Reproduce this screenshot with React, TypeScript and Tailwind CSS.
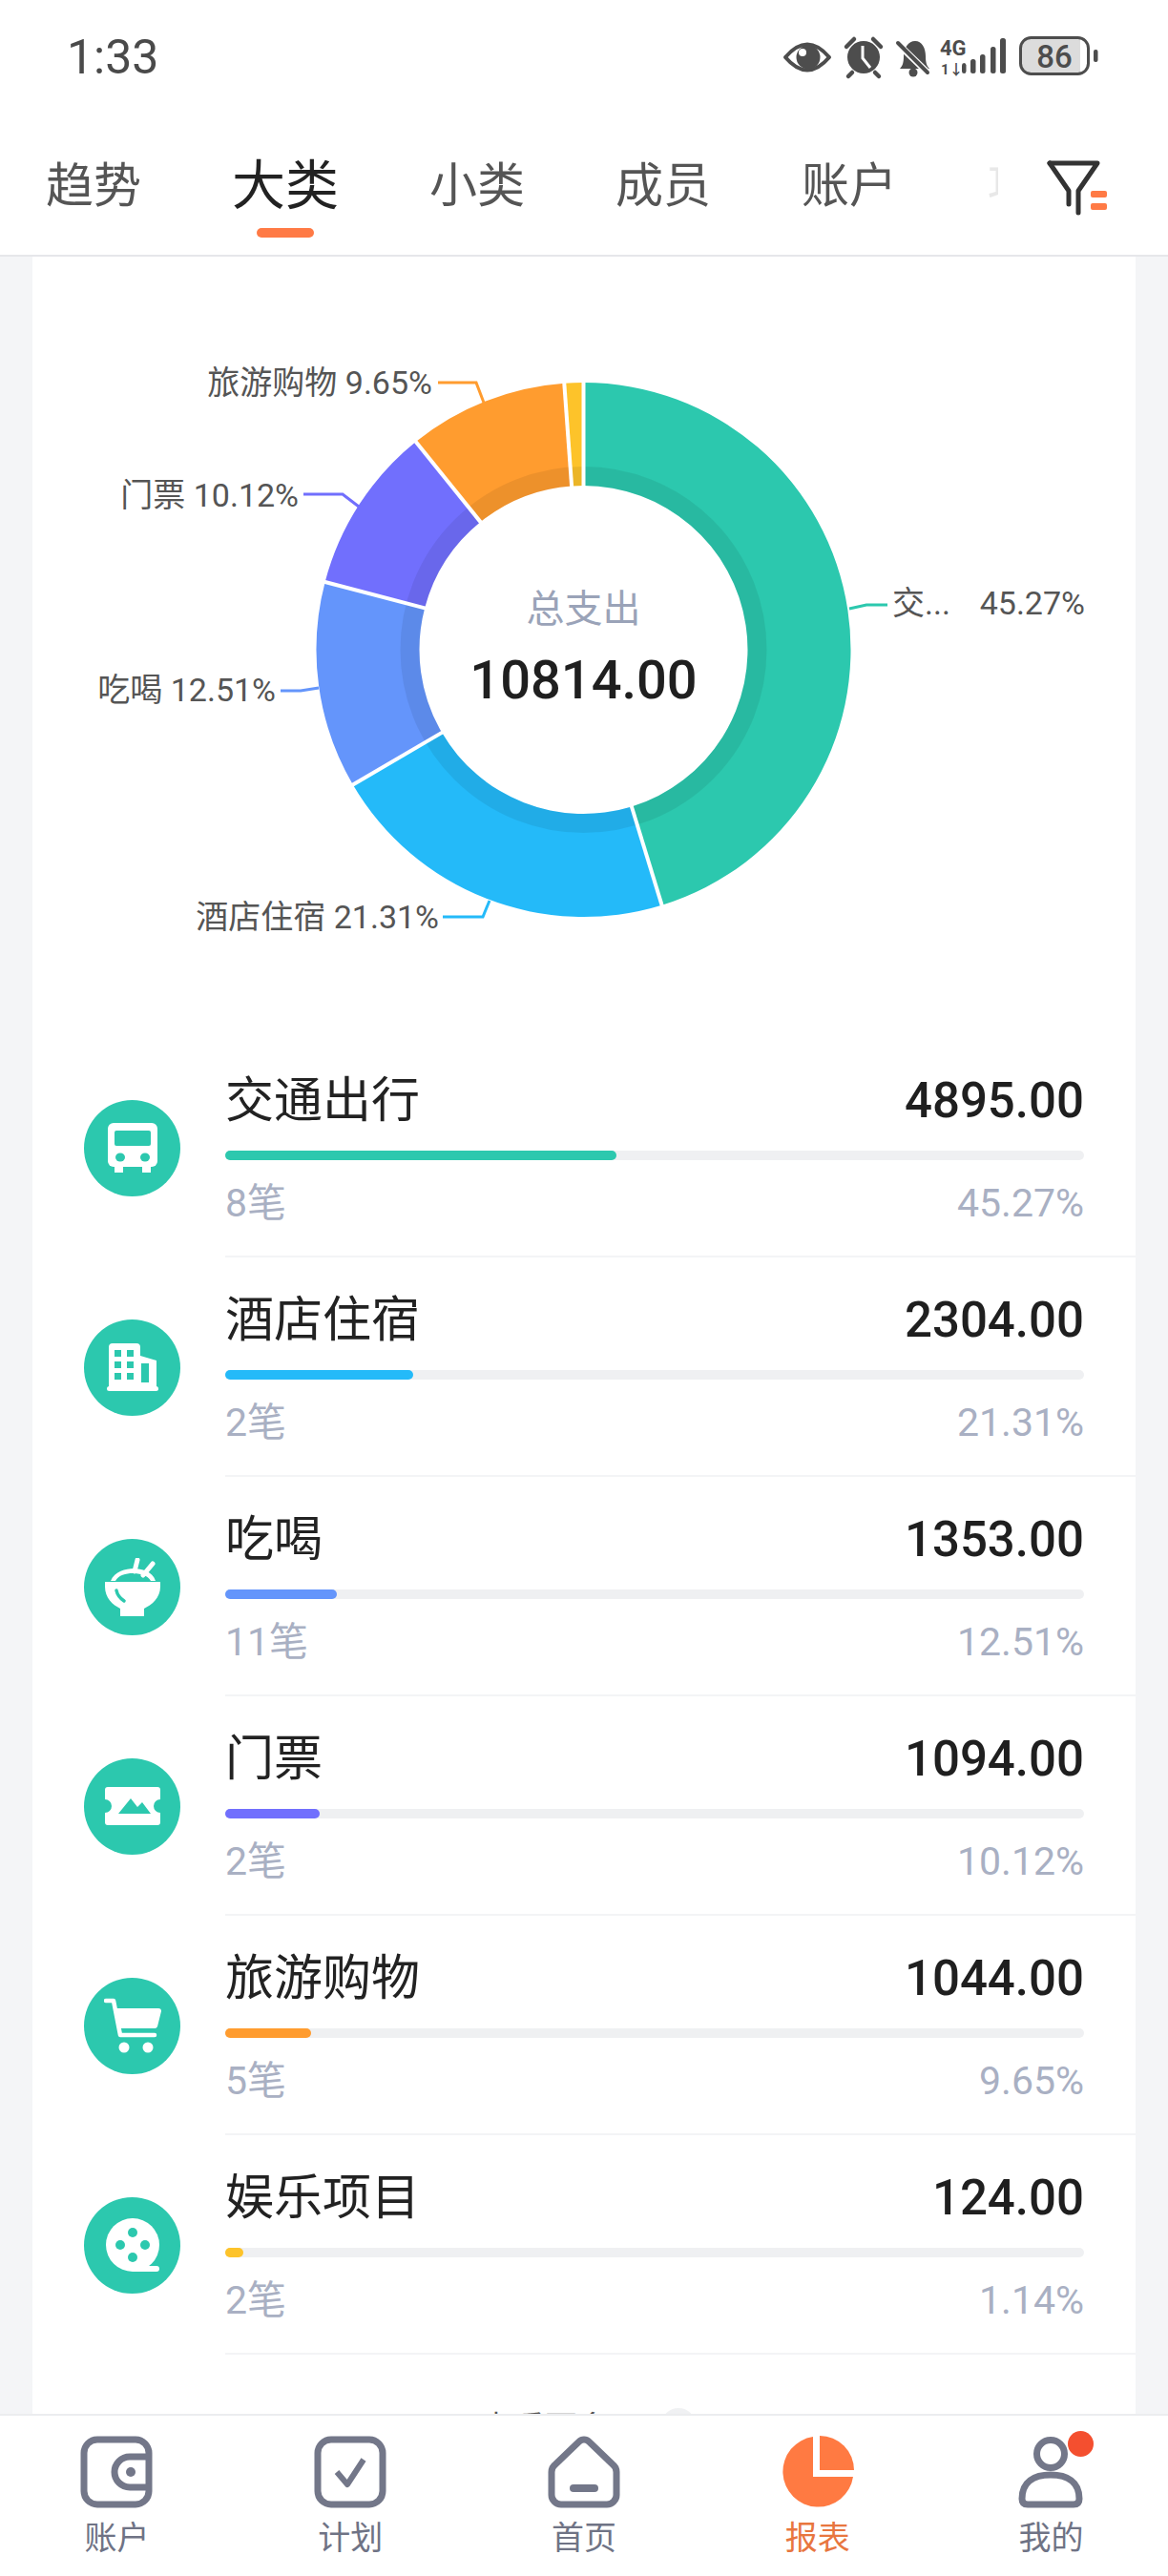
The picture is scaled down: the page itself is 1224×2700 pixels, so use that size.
import React from "react";

const TEAL = "#2cc8ae";
const CX = 611.5;
const CY = 680;
const pt = (r: number, deg: number) => {
  const a = (deg * Math.PI) / 180;
  return [CX + r * Math.sin(a), CY - r * Math.cos(a)];
};
const slices = [
  { v: 45.27, c: "#2cc8ae" },
  { v: 21.31, c: "#24baf9" },
  { v: 12.51, c: "#6495fb" },
  { v: 10.12, c: "#716ffd" },
  { v: 9.65, c: "#ff9c2f" },
  { v: 1.14, c: "#fdc32a" },
];

function Donut() {
  let acc = 0;
  const R = 280;
  const r = 172;
  const bounds: number[] = [];
  const paths = slices.map((s) => {
    const a0 = acc;
    const a1 = acc + (s.v / 100.01) * 360;
    acc = a1;
    bounds.push(a0);
    const large = a1 - a0 > 180 ? 1 : 0;
    const [x0, y0] = pt(R, a0);
    const [x1, y1] = pt(R, a1);
    const [x2, y2] = pt(r, a1);
    const [x3, y3] = pt(r, a0);
    return (
      <path
        key={s.c}
        d={`M${x0} ${y0}A${R} ${R} 0 ${large} 1 ${x1} ${y1}L${x2} ${y2}A${r} ${r} 0 ${large} 0 ${x3} ${y3}Z`}
        fill={s.c}
      />
    );
  });
  const lab = { fontSize: 34, fill: "#555" };
  const line = { fill: "none", strokeWidth: 3 };
  return (
    <svg viewBox="34 268 1156 819" width="1156" height="819" className="block">
      {paths}
      <circle cx={CX} cy={CY} r={182} fill="none" stroke="#000" strokeOpacity="0.07" strokeWidth="20" />
      {bounds.map((b) => {
        const [x0, y0] = pt(r - 1, b);
        const [x1, y1] = pt(R + 1, b);
        return <line key={b} x1={x0} y1={y0} x2={x1} y2={y1} stroke="#fff" strokeWidth="4" />;
      })}
      <polyline points="890,637 908,633 930,633" stroke="#2cc8ae" {...line} />
      <polyline points="464,960 506,960 513,943" stroke="#24baf9" {...line} />
      <polyline points="294,723 315,723 334,720" stroke="#6495fb" {...line} />
      <polyline points="318,517 359,517 376,530" stroke="#716ffd" {...line} />
      <polyline points="459,400 499,400 507,421" stroke="#ff9c2f" {...line} />
      <text x="935" y="643" {...lab}>交</text>
      <text x="969" y="643" {...lab}>...</text>
      <text x="1137" y="643" textAnchor="end" {...lab}>45.27%</text>
      <text x="460" y="972" textAnchor="end" {...lab}>酒店住宿 21.31%</text>
      <text x="289" y="734" textAnchor="end" {...lab}>吃喝 12.51%</text>
      <text x="313" y="530" textAnchor="end" {...lab}>门票 10.12%</text>
      <text x="453" y="412" textAnchor="end" {...lab}>旅游购物 9.65%</text>
      <text x={CX} y="651" textAnchor="middle" fontSize="40" fill="#9aa3b8">总支出</text>
      <text x={CX} y="731" textAnchor="middle" fontSize="56" fontWeight="500" fill="#1f1f1f">10814.00</text>
    </svg>
  );
}

function BusIcon() {
  return (
    <svg viewBox="0 0 52 52" width="52" height="52">
      <rect x="0" y="0" width="52" height="46" rx="6" fill="#fff" />
      <rect x="7" y="46" width="9" height="6" fill="#fff" />
      <rect x="36" y="46" width="9" height="6" fill="#fff" />
      <rect x="7" y="8" width="38" height="16" rx="2" fill={TEAL} />
      <ellipse cx="13" cy="36" rx="5" ry="4.5" fill={TEAL} />
      <ellipse cx="39" cy="36" rx="5" ry="4.5" fill={TEAL} />
    </svg>
  );
}
function BuildingIcon() {
  return (
    <svg viewBox="0 0 54 50" width="54" height="50">
      <path d="M2 4a4 4 0 0 1 4-4h25a4 4 0 0 1 4 4v9l17 5v28H2z" fill="#fff" />
      <rect x="0" y="45" width="54" height="5" rx="2.5" fill="#fff" />
      {[7, 19, 31].map((y) => (
        <g key={y} fill={TEAL}>
          <rect x="8" y={y} width="7" height="7" />
          <rect x="21" y={y} width="7" height="7" />
        </g>
      ))}
      <rect x="36" y="21" width="8" height="20" fill={TEAL} />
    </svg>
  );
}
function BowlIcon() {
  return (
    <svg viewBox="0 0 58 61" width="58" height="61">
      <path d="M34 2l-3 12M50 6l-10 12" stroke="#fff" strokeWidth="5" strokeLinecap="round" fill="none" />
      <path d="M6 24C10 14 22 11 30 11s20 3 23 13h-5C45 18 36 16 29 16S14 18 11 24z" fill="#fff" />
      <path d="M0 25h58v5c0 12-9 19-17 23v8H16v-8C8 49 0 42 0 30z" fill="#fff" />
      <path d="M12 34c1 5 5 9 8 11" stroke={TEAL} strokeWidth="3.5" strokeLinecap="round" fill="none" />
    </svg>
  );
}
function TicketIcon() {
  return (
    <svg viewBox="0 0 58 40" width="58" height="40">
      <path d="M3 0h52a3 3 0 0 1 3 3v10a7 7 0 0 0 0 14v10a3 3 0 0 1-3 3H3a3 3 0 0 1-3-3V27a7 7 0 0 0 0-14V3a3 3 0 0 1 3-3z" fill="#fff" />
      <path d="M14 28l13-16 7 9 5-5 9 12z" fill={TEAL} />
    </svg>
  );
}
function CartIcon() {
  return (
    <svg viewBox="0 0 60 58" width="60" height="58">
      <path d="M2 3h8l7 36h36" stroke="#fff" strokeWidth="4.5" strokeLinecap="round" strokeLinejoin="round" fill="none" />
      <path d="M12 11h45a3 3 0 0 1 3 3l-4 16a3 3 0 0 1-3 2H17z" fill="#fff" />
      <circle cx="21" cy="52" r="5.5" fill="#fff" />
      <circle cx="46" cy="52" r="5.5" fill="#fff" />
    </svg>
  );
}
function FilmIcon() {
  return (
    <svg viewBox="0 0 56 56" width="56" height="56">
      <circle cx="28" cy="28" r="28" fill="#fff" />
      <path d="M28 50h25a3 3 0 0 1 0 6H28z" fill="#fff" />
      <circle cx="28" cy="15" r="5" fill={TEAL} />
      <circle cx="28" cy="41" r="5" fill={TEAL} />
      <circle cx="15" cy="28" r="5" fill={TEAL} />
      <circle cx="41" cy="28" r="5" fill={TEAL} />
    </svg>
  );
}

const rows = [
  { t: "交通出行", a: "4895.00", n: "8笔", p: "45.27%", c: "#2cc8ae", w: 410, I: BusIcon },
  { t: "酒店住宿", a: "2304.00", n: "2笔", p: "21.31%", c: "#24baf9", w: 197, I: BuildingIcon },
  { t: "吃喝", a: "1353.00", n: "11笔", p: "12.51%", c: "#6495fb", w: 117, I: BowlIcon },
  { t: "门票", a: "1094.00", n: "2笔", p: "10.12%", c: "#716ffd", w: 99, I: TicketIcon },
  { t: "旅游购物", a: "1044.00", n: "5笔", p: "9.65%", c: "#ff9c2f", w: 90, I: CartIcon },
  { t: "娱乐项目", a: "124.00", n: "2笔", p: "1.14%", c: "#fdc32a", w: 19, I: FilmIcon },
];

function Row({ r }: { r: (typeof rows)[number] }) {
  const I = r.I;
  return (
    <div className="flex h-[230px]">
      <div className="flex w-[202px] shrink-0 items-center pl-[54px]">
        <div className="flex h-[101px] w-[101px] items-center justify-center rounded-full bg-[#2cc8ae]">
          <I />
        </div>
      </div>
      <div className="flex-1 border-b-2 border-[#f3f4f6] pt-[26px] pr-[54px]">
        <div className="flex h-[78px] items-center justify-between">
          <span className="text-[51px] leading-none text-[#222]">{r.t}</span>
          <span className="text-[51px] font-medium leading-none text-[#1f1f1f]">{r.a}</span>
        </div>
        <div className="mt-[14px] h-[10px] rounded-full bg-[#eff0f2]">
          <div className="h-[10px] rounded-full" style={{ width: r.w, backgroundColor: r.c }} />
        </div>
        <div className="mt-[15px] flex h-[60px] items-center justify-between text-[41px] leading-none text-[#a9b0c3]">
          <span>{r.n}</span>
          <span>{r.p}</span>
        </div>
      </div>
    </div>
  );
}

function StatusIcons() {
  const d = "#4d4d4d";
  return (
    <svg viewBox="820 30 332 60" width="332" height="60" className="block">
      <path d="M823 60Q846 33 869 60Q846 87 823 60Z" fill="#fff" stroke={d} strokeWidth="4" strokeLinejoin="round" />
      <circle cx="847" cy="60" r="12.5" fill={d} />
      <circle cx="841" cy="55" r="4" fill="#fff" />
      <circle cx="905" cy="60" r="17" fill={d} />
      <path d="M904 48v13l8 10" stroke="#fff" strokeWidth="3" fill="none" />
      <path d="M887 49l8-8M923 49l-8-8M893 76l-4 4M917 76l4 4" stroke={d} strokeWidth="4.5" strokeLinecap="round" />
      <path d="M943 72c3-3 4-7 4-13 0-9 5-16 12-16s11 7 11 16c0 6 1 10 4 13z" fill={d} />
      <circle cx="957" cy="76" r="4.5" fill={d} />
      <path d="M940 45l32 31" stroke="#fff" strokeWidth="7" />
      <path d="M941 45l31 31" stroke={d} strokeWidth="4" strokeLinecap="round" />
      <text x="985" y="58" fontSize="22" fontWeight="700" fill={d}>4G</text>
      <text x="986" y="78" fontSize="15" fontWeight="700" fill={d}>1↓</text>
      {[
        [1008, 66, 4.5],
        [1017, 62, 5.5],
        [1027, 57, 5.5],
        [1038, 49, 5.5],
        [1048, 40, 6],
      ].map(([x, y, w]) => (
        <rect key={x} x={x} y={y} width={w} height={77 - y} rx="2.5" fill={d} />
      ))}
      <path d="M1080 40h52v37h-52a10 10 0 0 1-10-10V50a10 10 0 0 1 10-10z" fill="#dcdcdc" />
      <rect x="1069.5" y="39.5" width="71" height="38" rx="11" fill="none" stroke={d} strokeWidth="3" />
      <text x="1105" y="71" textAnchor="middle" fontSize="33" fontWeight="500" fill={d}>86</text>
      <rect x="1146" y="52" width="4.5" height="13" rx="2" fill={d} />
    </svg>
  );
}

function FilterIcon() {
  return (
    <svg viewBox="0 0 66 60" width="66" height="60" className="block">
      <path d="M3 4h50L33 33v23" fill="none" stroke="#333" strokeWidth="5" strokeLinejoin="round" strokeLinecap="round" />
      <path d="M3 4l20 29v14" fill="none" stroke="#333" strokeWidth="5" strokeLinejoin="round" strokeLinecap="round" />
      <rect x="46" y="33" width="17" height="7" rx="2" fill="#ff7a45" />
      <rect x="46" y="46" width="17" height="7" rx="2" fill="#ff7a45" />
    </svg>
  );
}

const navC = "#737789";
function NavWallet() {
  return (
    <svg viewBox="0 0 76 76" width="76" height="76">
      <rect x="4" y="4" width="68" height="68" rx="14" fill="none" stroke={navC} strokeWidth="7" />
      <path d="M72 22H52a16 16 0 0 0 0 32h20" fill="none" stroke={navC} strokeWidth="7" />
      <circle cx="53" cy="38" r="5" fill={navC} />
    </svg>
  );
}
function NavCheck() {
  return (
    <svg viewBox="0 0 76 76" width="76" height="76">
      <rect x="4" y="4" width="68" height="68" rx="14" fill="none" stroke={navC} strokeWidth="7" />
      <path d="M24 38l11 13 17-26" fill="none" stroke={navC} strokeWidth="6" strokeLinejoin="round" />
    </svg>
  );
}
function NavHome() {
  return (
    <svg viewBox="0 0 76 76" width="76" height="76">
      <path d="M33 6a7 7 0 0 1 10 0L68 30a10 10 0 0 1 4 8V62a10 10 0 0 1-10 10H14A10 10 0 0 1 4 62V38a10 10 0 0 1 4-8Z" fill="none" stroke={navC} strokeWidth="7" strokeLinejoin="round" />
      <rect x="23" y="51" width="30" height="8" rx="4" fill={navC} />
    </svg>
  );
}
function NavPie() {
  return (
    <svg viewBox="0 0 76 76" width="76" height="76">
      <path d="M33 1A37 37 0 1 0 75 43H33z" fill="#ff7a42" />
      <path d="M40 0a36 36 0 0 1 36 36H40z" fill="#ff7a42" />
    </svg>
  );
}
function NavUser() {
  return (
    <div className="relative h-[76px] w-[76px]">
      <svg viewBox="0 0 76 76" width="76" height="76">
        <circle cx="37" cy="19" r="14.5" fill="none" stroke={navC} strokeWidth="7" />
        <path d="M7 66c0-18 13-25 30-25s30 7 30 25c0 4-2 6-6 6H13c-4 0-6-2-6-6z" fill="none" stroke={navC} strokeWidth="7" />
      </svg>
      <div className="absolute top-[-5px] left-[55px] h-[27px] w-[27px] rounded-full bg-[#f44f2f]" />
    </div>
  );
}

const nav = [
  { l: "账户", I: NavWallet },
  { l: "计划", I: NavCheck },
  { l: "首页", I: NavHome },
  { l: "报表", I: NavPie, on: true },
  { l: "我的", I: NavUser },
];

export default function App() {
  return (
    <div className="flex h-[2700px] w-[1224px] flex-col overflow-hidden bg-[#f4f5f7] font-[Roboto,'Noto_Sans_CJK_SC',sans-serif]">
      <header className="h-[269px] shrink-0 border-b-2 border-[#e6e7ea] bg-white">
        <div className="flex h-[120px] items-center justify-between pr-[72px] pl-[70px]">
          <span className="text-[50px] leading-none text-[#4a4a4a]">1:33</span>
          <StatusIcons />
        </div>
        <div className="flex h-[147px] items-start pl-[48px]">
          <div className="flex w-[998px] gap-[95px] overflow-hidden">
            {["趋势", "大类", "小类", "成员", "账户", "项目"].map((t, i) =>
              i === 1 ? (
                <div key={t} className="flex shrink-0 flex-col items-center pt-[40px]">
                  <span className="flex h-[70px] items-center text-[56px] leading-none text-[#222]">{t}</span>
                  <div className="mt-[9px] h-[10px] w-[60px] rounded-full bg-[#ff7a45]" />
                </div>
              ) : (
                <div key={t} className="flex shrink-0 flex-col items-center pt-[40px]">
                  <span className={`flex h-[70px] items-center text-[50px] leading-none ${i === 5 ? "text-[#e8e8e8]" : "text-[#555]"}`}>{t}</span>
                </div>
              ),
            )}
          </div>
          <div className="mt-[47px] ml-[51px]">
            <FilterIcon />
          </div>
        </div>
      </header>
      <main className="mx-[34px] min-h-0 flex-1 overflow-hidden bg-white">
        <Donut />
        {rows.map((r) => (
          <Row key={r.t} r={r} />
        ))}
        <div className="mt-[56px] flex items-start gap-[54px] pl-[469px]">
          <span className="mt-[4px] text-[34px] leading-none text-[#555]">查看更多</span>
          <div className="h-[36px] w-[36px] rounded-full bg-[#f0f1f3]" />
        </div>
      </main>
      <nav className="grid h-[170px] shrink-0 grid-cols-5 border-t-2 border-[#ecedef] bg-white">
        {nav.map(({ l, I, on }) => (
          <div key={l} className="flex flex-col items-center pt-[21px]">
            <I />
            <span className={`mt-[9px] text-[34px] leading-[44px] ${on ? "text-[#e8763f]" : "text-[#6f7385]"}`}>{l}</span>
          </div>
        ))}
      </nav>
    </div>
  );
}
